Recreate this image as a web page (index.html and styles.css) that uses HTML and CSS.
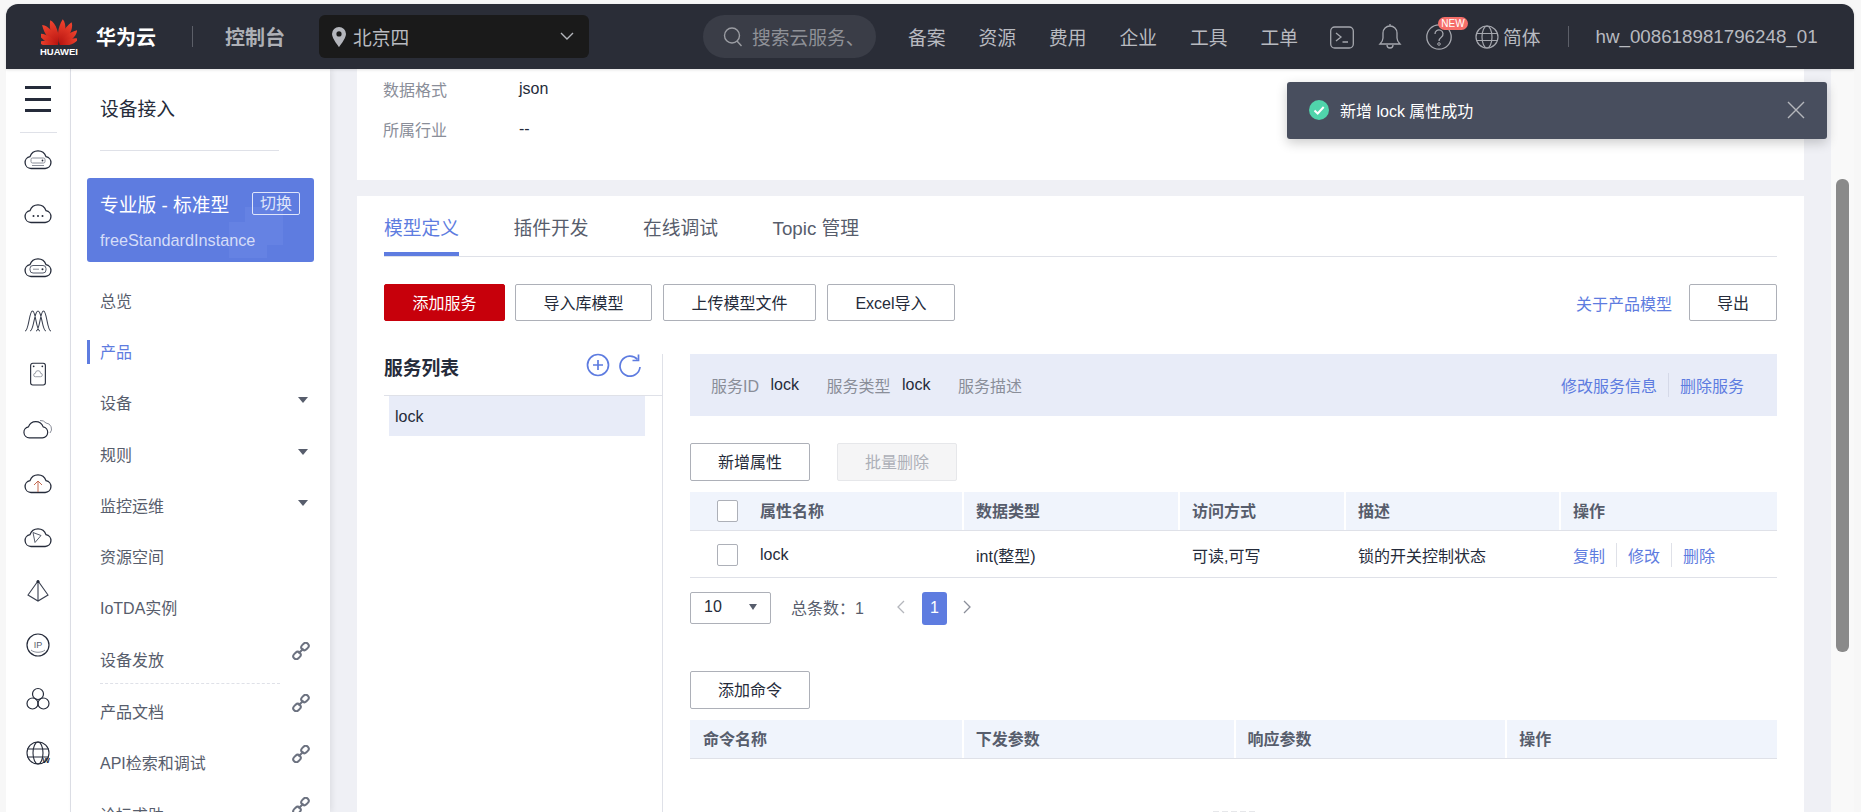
FILE: index.html
```html
<!DOCTYPE html>
<html lang="zh-CN">
<head>
  <meta charset="UTF-8">
  <meta name="viewport" content="width=device-width, initial-scale=1.0">
  <title>设备接入 - 控制台</title>
  <link rel="stylesheet" href="styles.css">
</head>
<body>
  <svg class="defs" width="0" height="0">
    <defs>
      <symbol id="cloud" viewBox="0 0 30 24">
        <path d="M8 21.5a6 6 0 0 1-1-11.9A8.5 8.5 0 0 1 23 9.6a6 6 0 0 1-.8 11.9z" fill="none" stroke="currentColor" stroke-width="1.3"/>
      </symbol>
      <symbol id="chain" viewBox="0 0 18 18">
        <g fill="none" stroke="currentColor" stroke-width="2">
          <rect x="9" y="1.5" width="8" height="6" rx="3" transform="rotate(-45 13 4.5)"/>
          <rect x="1" y="10.5" width="8" height="6" rx="3" transform="rotate(-45 5 13.5)"/>
          <path d="M6.5 11.5l5-5"/>
        </g>
      </symbol>
      <path id="petal" d="M0 0C-4.6-6-6.2-16-2.6-25.500C2.600-22 4.400-9 0 0z"/>
      <linearGradient id="petalfill" x1="0" y1="0" x2="0" y2="1">
        <stop offset="0" stop-color="#f2452f"/>
        <stop offset="1" stop-color="#b5120f"/>
      </linearGradient>
    </defs>
  </svg>

  <div class="app">
    <header class="topbar">
      <div class="logo">
        <svg width="36" height="28" viewBox="0 0 36 28">
          <g transform="translate(18 27.500)" fill="url(#petalfill)">
            <use href="#petal" transform="rotate(-12) translate(-1 0)"/>
            <use href="#petal" transform="rotate(12) translate(1 0)"/>
            <use href="#petal" transform="rotate(-33) translate(-1 0)"/>
            <use href="#petal" transform="rotate(33) translate(1 0)"/>
            <use href="#petal" transform="rotate(-55) translate(-1 0) scale(.9)"/>
            <use href="#petal" transform="rotate(55) translate(1 0) scale(.9)"/>
            <use href="#petal" transform="rotate(-76) translate(-1 0) scale(.8)"/>
            <use href="#petal" transform="rotate(76) translate(1 0) scale(.8)"/>
          </g>
        </svg>
        <span class="logo-word">HUAWEI</span>
      </div>
      <div class="brand">华为云</div>
      <div class="bar-divider brand-divider"></div>
      <div class="console">控制台</div>
      <div class="region">
        <svg class="pin" width="16" height="22" viewBox="0 0 16 22"><path d="M8 1a7 7 0 0 0-7 7c0 4.500 7 13 7 13s7-8.500 7-13a7 7 0 0 0-7-7zm0 9.500a2.600 2.600 0 1 1 0-5.200 2.600 2.600 0 0 1 0 5.200z" fill="#b4b6bc"/></svg>
        <span class="region-name">北京四</span>
        <svg class="chev" width="14" height="9" viewBox="0 0 14 9"><path d="M1 1l6 6 6-6" fill="none" stroke="#b4b6bc" stroke-width="1.400"/></svg>
      </div>
      <div class="search">
        <svg width="20" height="22" viewBox="0 0 20 22"><circle cx="9" cy="9.500" r="7.500" fill="none" stroke="#9a9ca2" stroke-width="1.400"/><path d="M14 15l4.500 5" stroke="#9a9ca2" stroke-width="1.400"/></svg>
        <span class="search-text">搜索云服务、</span>
      </div>
      <nav class="topnav">
        <a>备案</a><a>资源</a><a>费用</a><a>企业</a><a>工具</a><a>工单</a>
      </nav>
      <div class="top-icons">
        <svg width="24" height="24" viewBox="0 0 24 24"><rect x=".7" y="2" width="22.600" height="21" rx="4" fill="none" stroke="#a5a7ae" stroke-width="1.300"/><path d="M6 8l5 4-5 4M12.500 17H18" fill="none" stroke="#a5a7ae" stroke-width="1.300"/></svg>
        <svg width="24" height="28" viewBox="0 0 24 28"><path d="M2 21c2-2 3-3 3-6V10a7 7 0 0 1 14 0v5c0 3 1 4 3 6zM9 22a3 3 0 0 0 6 0M12 3V1" fill="none" stroke="#a5a7ae" stroke-width="1.300"/></svg>
        <div class="help">
          <svg width="26" height="26" viewBox="0 0 26 26"><circle cx="13" cy="13" r="12.200" fill="none" stroke="#a5a7ae" stroke-width="1.300"/><path d="M9 10a4 4 0 1 1 6.500 3c-1.500 1.200-2.500 2-2.500 4" fill="none" stroke="#a5a7ae" stroke-width="1.300"/><circle cx="13" cy="20" r="1.300" fill="none" stroke="#a5a7ae"/></svg>
          <span class="new-badge">NEW</span>
        </div>
        <svg class="globe" width="26" height="26" viewBox="0 0 26 26"><g fill="none" stroke="#a5a7ae" stroke-width="1.200"><circle cx="13" cy="13" r="11"/><ellipse cx="13" cy="13" rx="5" ry="11"/><path d="M2.500 9.500h21M2.500 16.500h21"/></g></svg>
      </div>
      <span class="lang">简体</span>
      <div class="bar-divider user-divider"></div>
      <span class="user">hw_008618981796248_01</span>
    </header>

    <div class="main">
      <aside class="rail">
        <div class="burger"><i></i><i></i><i></i></div>
        <div class="rail-line"></div>
        <div class="rail-icons">
          <svg viewBox="0 0 30 24"><use href="#cloud"/><rect x="8" y="11" width="14" height="5" rx="1.500" fill="none" stroke="#8a8e99"/><circle cx="19.500" cy="13.500" r=".9"/><path d="M9 18.500h12" stroke="#8a8e99"/></svg>
          <svg viewBox="0 0 30 24"><use href="#cloud"/><circle cx="10.500" cy="15" r="1"/><circle cx="15" cy="15" r="1"/><circle cx="19.500" cy="15" r="1"/></svg>
          <svg viewBox="0 0 30 24"><use href="#cloud"/><rect x="7" y="10.500" width="16" height="7.500" rx="3" fill="none" stroke="#575d6c"/><circle cx="19.500" cy="14.200" r="1"/><path d="M10 14.200h6" stroke="#8a8e99"/></svg>
          <svg viewBox="0 0 30 24"><path d="M2 22C6 22 6 2 9.500 2S13 22 17 22M7 22C11 22 11 2 15 2S19 22 23 22M13 22C17 22 17 2 20.500 2S24 22 28 22" fill="none" stroke="#3a4050" stroke-width="1.100"/></svg>
          <svg viewBox="0 0 30 30"><rect x="6.500" y="1.500" width="17" height="25" rx="2.500" fill="none" stroke="#252b3a" stroke-width="1.300"/><circle cx="10" cy="5" r="1"/><circle cx="20" cy="5" r="1"/><path d="M12 17a2 2 0 0 1 0-4 3 3 0 0 1 6 0 2 2 0 0 1 0 4z" fill="none" stroke="#8a8e99"/></svg>
          <svg viewBox="0 0 30 24"><path d="M17 3.500a7 7 0 0 1 6 2.500 6 6 0 0 1 4 10" fill="none" stroke="#8a8e99"/><g transform="translate(-1 1) scale(.92)"><use href="#cloud" width="30" height="24"/></g></svg>
          <svg viewBox="0 0 30 24"><use href="#cloud"/><path d="M15 21V11M11 14l4-4 4 4" fill="none" stroke="#c46a50"/></svg>
          <svg viewBox="0 0 30 24"><use href="#cloud"/><path d="M10 7.500l8 3-6 7z" fill="none" stroke="#575d6c"/></svg>
          <svg viewBox="0 0 30 24"><path d="M15 2L5 16l10 6 10-6zM15 2v20" fill="none" stroke="#3a4050" stroke-width="1.100"/><circle cx="15" cy="2.500" r="1.500"/></svg>
          <svg viewBox="0 0 30 24"><circle cx="15" cy="12" r="11" fill="none" stroke="#252b3a" stroke-width="1.200"/><text x="15" y="14.500" class="rail-text">IP</text><path d="M8 17c3 3 11 3 14 0" fill="none" stroke="#8a8e99"/></svg>
          <svg viewBox="0 0 30 24"><g fill="none" stroke="#252b3a" stroke-width="1.200"><circle cx="15" cy="7" r="5.500"/><circle cx="9.500" cy="16.500" r="5.500"/><circle cx="20.500" cy="16.500" r="5.500"/></g></svg>
          <svg viewBox="0 0 30 24"><g fill="none" stroke="#252b3a" stroke-width="1.100"><circle cx="15" cy="12" r="11"/><ellipse cx="15" cy="12" rx="5" ry="11"/><path d="M4 8h22M4 16h22"/></g><text x="23" y="22" class="rail-w">W</text></svg>
        </div>
      </aside>

      <aside class="sidenav">
        <div class="side-title">设备接入</div>
        <div class="side-line"></div>
        <div class="instance">
          <div class="instance-top">
            <span>专业版 - 标准型</span>
            <span class="switch">切换</span>
          </div>
          <div class="instance-name">freeStandardInstance</div>
        </div>
        <ul class="side-menu">
          <li>总览</li>
          <li class="active">产品</li>
          <li>设备<i class="caret"></i></li>
          <li>规则<i class="caret"></i></li>
          <li>监控运维<i class="caret"></i></li>
          <li>资源空间</li>
          <li>IoTDA实例</li>
          <li class="split">设备发放<svg class="link"><use href="#chain"/></svg></li>
          <li>产品文档<svg class="link"><use href="#chain"/></svg></li>
          <li>API检索和调试<svg class="link"><use href="#chain"/></svg></li>
          <li>论坛求助<svg class="link"><use href="#chain"/></svg></li>
        </ul>
      </aside>

      <main class="content">
        <section class="card info-card">
          <div class="info-row"><span class="info-key">数据格式</span><span>json</span></div>
          <div class="info-row"><span class="info-key">所属行业</span><span>--</span></div>
        </section>

        <section class="card model-card">
          <div class="tabs">
            <a class="tab on">模型定义</a>
            <a class="tab">插件开发</a>
            <a class="tab">在线调试</a>
            <a class="tab">Topic 管理</a>
          </div>

          <div class="toolbar">
            <button class="btn btn-red">添加服务</button>
            <button class="btn btn-import">导入库模型</button>
            <button class="btn btn-upload">上传模型文件</button>
            <button class="btn btn-excel">Excel导入</button>
            <a class="link-text about">关于产品模型</a>
            <button class="btn btn-export">导出</button>
          </div>

          <div class="service-area">
            <div class="service-list">
              <div class="list-head">
                <span class="list-title">服务列表</span>
                <svg width="24" height="24" viewBox="0 0 24 24"><circle cx="12" cy="12" r="10.500" fill="none" stroke="#5e7ce0" stroke-width="1.700"/><path d="M12 7v10M7 12h10" stroke="#5e7ce0" stroke-width="1.700"/></svg>
                <svg width="24" height="24" viewBox="0 0 24 24"><path d="M19.500 6.500A10 10 0 1 0 22 14" fill="none" stroke="#5e7ce0" stroke-width="1.700"/><path d="M20.500 1.500v6h-6" fill="none" stroke="#5e7ce0" stroke-width="1.700"/></svg>
              </div>
              <div class="list-item">lock</div>
            </div>

            <div class="service-detail">
              <div class="band">
                <span class="band-key">服务ID</span><span class="band-val">lock</span>
                <span class="band-key">服务类型</span><span class="band-val">lock</span>
                <span class="band-key">服务描述</span>
                <span class="band-links">
                  <a class="link-text">修改服务信息</a><a class="link-text">删除服务</a>
                </span>
              </div>

              <div class="row-btns">
                <button class="btn btn-wide">新增属性</button>
                <button class="btn btn-wide btn-off">批量删除</button>
              </div>

              <div class="grid prop-grid grid-head">
                <div class="cell check-cell"><i class="check"></i>属性名称</div>
                <div class="cell">数据类型</div>
                <div class="cell">访问方式</div>
                <div class="cell">描述</div>
                <div class="cell">操作</div>
              </div>
              <div class="grid prop-grid grid-row">
                <div class="cell check-cell"><i class="check"></i>lock</div>
                <div class="cell">int(整型)</div>
                <div class="cell">可读,可写</div>
                <div class="cell">锁的开关控制状态</div>
                <div class="cell ops"><a class="link-text">复制</a><a class="link-text">修改</a><a class="link-text">删除</a></div>
              </div>

              <div class="pager">
                <div class="page-size">10<i class="caret"></i></div>
                <span class="total">总条数：1</span>
                <svg width="10" height="14" viewBox="0 0 10 14"><path d="M8 1L2 7l6 6" fill="none" stroke="#b4b6bc" stroke-width="1.300"/></svg>
                <span class="page-now">1</span>
                <svg width="10" height="14" viewBox="0 0 10 14"><path d="M2 1l6 6-6 6" fill="none" stroke="#8a8e99" stroke-width="1.300"/></svg>
              </div>

              <button class="btn btn-wide btn-command">添加命令</button>

              <div class="grid cmd-grid grid-head">
                <div class="cell">命令名称</div>
                <div class="cell">下发参数</div>
                <div class="cell">响应参数</div>
                <div class="cell">操作</div>
              </div>
              <div class="empty-mark"></div>
            </div>
          </div>
        </section>
      </main>

      <div class="scrollbar"><div class="thumb"></div></div>

      <div class="toast">
        <svg width="20" height="20" viewBox="0 0 20 20"><circle cx="10" cy="10" r="10" fill="#50d4ab"/><path d="M5.500 10.500l3.200 3 6-6.500" fill="none" stroke="#fff" stroke-width="2"/></svg>
        <span class="toast-text">新增 lock 属性成功</span>
        <svg width="18" height="18" viewBox="0 0 18 18"><path d="M1 1l16 16M17 1L1 17" stroke="#b4b6bc" stroke-width="1.400"/></svg>
      </div>
    </div>
  </div>
</body>
</html>
```

FILE: styles.css
```css
* {
  margin: 0;
  padding: 0;
  box-sizing: border-box;
}

body {
  font-family: "Liberation Sans", "Noto Sans CJK SC", sans-serif;
  font-size: 16px;
  color: #252b3a;
  background: #f7f7f7;
  height: 100vh;
  overflow: hidden;
  padding: 4px 7px 0 6px;
}

.defs {
  position: absolute;
}

.app {
  height: 808px;
  display: flex;
  flex-direction: column;
}

/* top bar */
.topbar {
  height: 65px;
  flex: none;
  display: flex;
  align-items: center;
  background: #2a2d37;
  border-radius: 12px 12px 0 0;
  color: #b8bac0;
  position: relative;
  z-index: 3;
  box-shadow: 0 1px 3px rgba(0, 0, 0, 0.12);
}

.logo {
  width: 36px;
  margin-left: 35px;
  display: flex;
  flex-direction: column;
  align-items: center;
}

.logo svg {
  margin-top: 1px;
}

.logo-word {
  font-size: 9.500px;
  font-weight: bold;
  color: #fff;
  line-height: 11px;
  margin-top: 1px;
}

.brand {
  margin-left: 19px;
  font-size: 20px;
  font-weight: bold;
  color: #fff;
}

.bar-divider {
  width: 1px;
  height: 21px;
  background: #5c5f68;
}

.brand-divider {
  margin-left: 36px;
}

.console {
  margin-left: 32px;
  font-size: 20px;
  font-weight: bold;
  color: #aeb0b6;
}

.region {
  width: 270px;
  height: 43px;
  margin-left: 34px;
  padding: 0 15px 0 12px;
  display: flex;
  align-items: center;
  background: #1a1a1a;
  border-radius: 6px;
}

.region-name {
  margin-left: 6px;
  font-size: 18.750px;
  flex: 1;
}

.search {
  width: 173px;
  height: 43px;
  margin-left: 114px;
  padding-left: 20px;
  display: flex;
  align-items: center;
  gap: 9px;
  background: #3a3d47;
  border-radius: 22px;
  overflow: hidden;
}

.search-text {
  font-size: 18.750px;
  color: #8f9197;
  white-space: nowrap;
}

.topnav {
  margin-left: 32px;
  display: flex;
  gap: 33px;
  font-size: 18.750px;
}

.top-icons {
  margin-left: 32px;
  display: flex;
  align-items: center;
  gap: 24px;
}

.globe {
  margin-left: -2px;
}

.help {
  position: relative;
  display: flex;
}

.new-badge {
  position: absolute;
  left: 12px;
  top: -7px;
  width: 30px;
  height: 13px;
  background: #f66f6a;
  border-radius: 7px;
  color: #fff;
  font-size: 10px;
  line-height: 13px;
  text-align: center;
}

.lang {
  margin-left: 3px;
  font-size: 18.750px;
}

.user-divider {
  margin-left: 27px;
}

.user {
  margin-left: 27px;
  font-size: 18.750px;
}

/* body of the page */
.main {
  flex: 1;
  min-height: 0;
  display: flex;
  position: relative;
  background: #eff0f5;
}

.rail {
  width: 65px;
  flex: none;
  background: #fff;
  border-right: 1px solid #dfe1e8;
  padding-top: 17px;
  display: flex;
  flex-direction: column;
  align-items: center;
}

.burger {
  width: 26px;
  display: flex;
  flex-direction: column;
  gap: 8.500px;
}

.burger i {
  display: block;
  height: 3px;
  background: #252b3a;
}

.rail-line {
  width: 37px;
  height: 1px;
  margin-top: 20px;
  background: #dfe1e8;
}

.rail-icons {
  margin-top: 13px;
  display: flex;
  flex-direction: column;
  align-items: center;
  gap: 28px;
  color: #252b3a;
}

.rail-icons svg {
  width: 30px;
  height: 26px;
  fill: #252b3a;
}

.rail-icons use {
  color: #252b3a;
}

.rail-text {
  font-size: 9px;
  text-anchor: middle;
  fill: #575d6c;
}

.rail-w {
  font-size: 8px;
  font-weight: bold;
  text-anchor: middle;
  fill: #252b3a;
  stroke: #fff;
  stroke-width: 0;
}

.sidenav {
  width: 259px;
  flex: none;
  background: #fff;
  box-shadow: 2px 0 6px rgba(0, 0, 0, 0.08);
  padding: 0 16px;
  position: relative;
  z-index: 1;
}

.side-title {
  margin: 29px 0 0 13px;
  font-size: 18.750px;
  line-height: 24px;
}

.side-line {
  width: 179px;
  height: 1px;
  margin: 28px 0 0 13px;
  background: #dfe1e8;
}

.instance {
  width: 227px;
  height: 84px;
  margin-top: 27px;
  padding: 12px 14px 0 13px;
  border-radius: 3px;
  color: #fff;
  background:
    linear-gradient(#6582e3, #6582e3) 158px 29px / 38px 38px no-repeat,
    linear-gradient(#6582e3, #6582e3) 142px 44px / 38px 36px no-repeat,
    #5e7ce0;
}

.instance-top {
  display: flex;
  justify-content: space-between;
  align-items: center;
  font-size: 18.750px;
}

.switch {
  width: 48px;
  height: 23px;
  border: 1px solid #dfe5fa;
  border-radius: 2px;
  font-size: 16px;
  line-height: 21px;
  text-align: center;
  color: #dfe5fa;
}

.instance-name {
  margin-top: 14px;
  font-size: 16.250px;
  color: #d5ddf8;
}

.side-menu {
  list-style: none;
  margin-top: 12px;
  color: #575d6c;
}

.side-menu li {
  height: 51.300px;
  padding-left: 13px;
  display: flex;
  align-items: center;
  justify-content: space-between;
  position: relative;
}

.side-menu li.active {
  color: #5e7ce0;
}

.side-menu li.active::before {
  content: "";
  position: absolute;
  left: 0;
  top: 15px;
  width: 3px;
  height: 24px;
  background: #5e7ce0;
}

.side-menu li.split {
  margin-bottom: 1px;
}

.side-menu li.split::after {
  content: "";
  position: absolute;
  left: 13px;
  right: 34px;
  bottom: 0;
  border-bottom: 1px dashed #dfe1e8;
}

.caret {
  display: block;
  width: 0;
  height: 0;
  margin: -4px 6px 0 0;
  border-left: 5px solid transparent;
  border-right: 5px solid transparent;
  border-top: 6px solid #575d6c;
}

.link {
  width: 18px;
  height: 18px;
  margin: -16px 4px 0 0;
  color: #6c7280;
}

/* content column */
.content {
  flex: 1;
  min-width: 0;
  padding: 0 27px;
  overflow: hidden;
}

.card {
  background: #fff;
}

.info-card {
  height: 111px;
  padding: 0 26px;
}

.info-row {
  display: flex;
  align-items: center;
  height: 40px;
}

.info-key {
  width: 136px;
  color: #8a8e99;
}

.model-card {
  margin-top: 16px;
  padding: 0 27px;
  height: 700px;
}

.tabs {
  display: flex;
  gap: 54.500px;
  padding-top: 20px;
  border-bottom: 1px solid #dfe1e8;
  font-size: 18.750px;
  height: 61px;
}

.tab {
  height: 60px;
  margin-top: -20px;
  padding-top: 21px;
  line-height: 24px;
  color: #575d6c;
}

.tab.on {
  color: #5e7ce0;
  border-bottom: 4px solid #5e7ce0;
}

.toolbar {
  display: flex;
  align-items: center;
  margin-top: 27px;
  height: 37px;
}

.btn {
  height: 37px;
  padding-bottom: 2px;
  font: inherit;
  color: #252b3a;
  background: #fff;
  border: 1px solid #adb0b8;
  border-radius: 2px;
}

.btn-red {
  width: 121px;
  background: #c7000b;
  border-color: #c7000b;
  color: #fff;
}

.btn-import {
  width: 137px;
  margin-left: 10px;
}

.btn-upload {
  width: 153px;
  margin-left: 11px;
}

.btn-excel {
  width: 128px;
  margin-left: 11px;
}

.about {
  margin-left: auto;
}

.btn-export {
  width: 88px;
  margin-left: 17px;
}

.link-text {
  color: #5e7ce0;
}

.service-area {
  display: flex;
  margin-top: 33px;
}

.service-list {
  width: 279px;
  flex: none;
  border-right: 1px solid #dfe1e8;
  height: 500px;
}

.list-head {
  height: 42px;
  display: flex;
  align-items: flex-start;
  gap: 8px;
  padding-right: 20px;
  padding-top: 1px;
  border-bottom: 1px solid #dfe1e8;
}

.list-title {
  flex: 1;
  font-size: 18.750px;
  font-weight: bold;
  line-height: 26px;
  padding-top: 1px;
}

.list-head svg {
  margin-top: -2px;
}

.list-item {
  width: 256px;
  height: 40px;
  margin-left: 5px;
  padding-left: 6px;
  line-height: 41px;
  background: #e8ecf8;
}

.service-detail {
  flex: 1;
  min-width: 0;
  padding-left: 27px;
}

.band {
  height: 62px;
  padding: 0 33px 0 21px;
  display: flex;
  align-items: center;
  background: #e8ecf8;
}

.band-key {
  color: #8a8e99;
}

.band-val {
  margin: 0 27.500px 0 11.500px;
}

.band-links {
  margin-left: auto;
  display: flex;
}

.band-links a + a {
  margin-left: 11px;
  padding-left: 11px;
  border-left: 1px solid #d5d9e8;
}

.row-btns {
  display: flex;
  gap: 27px;
  margin-top: 27px;
}

.btn-wide {
  width: 120px;
  height: 38px;
  display: block;
}

.btn-off {
  background: #f5f5f6;
  border-color: #e6e7ea;
  color: #adb0b8;
}

.grid {
  display: grid;
}

.prop-grid {
  grid-template-columns: 272px 216px 166px 215px 218px;
}

.cmd-grid {
  grid-template-columns: repeat(4, 1fr);
}

.cell {
  display: flex;
  align-items: center;
  padding-left: 14px;
}

.grid-head {
  height: 39px;
  margin-top: 11px;
  background: #f0f4fc;
  border-bottom: 1px solid #dfe1e8;
  font-weight: bold;
  color: #575d6c;
}

.grid-head .cell {
  padding-left: 13px;
  padding-bottom: 3px;
}

.grid-head .cell + .cell {
  padding-left: 12px;
  border-left: 2px solid #fff;
}

.grid-row {
  height: 47px;
  border-bottom: 1px solid #dfe1e8;
}

.grid-row .cell {
  padding-top: 1px;
}

.grid-head .check-cell,
.grid-row .check-cell {
  padding-left: 27px;
}

.check {
  display: block;
  width: 21px;
  height: 22px;
  margin-right: 22px;
  border: 1px solid #adb0b8;
  border-radius: 2px;
  background: #fff;
}

.grid-head .check {
  margin-top: 3px;
}

.ops a + a {
  margin-left: 11px;
  padding-left: 11px;
  border-left: 1px solid #dfe1e8;
}

.pager {
  height: 33px;
  margin-top: 14px;
  display: flex;
  align-items: center;
  color: #575d6c;
}

.pager svg {
  margin-top: -3px;
}

.page-size {
  width: 81px;
  height: 32px;
  margin-top: -1px;
  padding: 0 13px 2px;
  display: flex;
  align-items: center;
  justify-content: space-between;
  border: 1px solid #adb0b8;
  border-radius: 2px;
  color: #252b3a;
}

.page-size .caret {
  margin: 0;
  border-left-width: 4px;
  border-right-width: 4px;
}

.total {
  margin: -3px 32px 0 20px;
}

.page-now {
  width: 25px;
  height: 33px;
  margin: 0 15px 0 16px;
  line-height: 31px;
  text-align: center;
  color: #fff;
  background: #5e7ce0;
  border-radius: 3px;
}

.btn-command {
  margin-top: 46px;
}

.cmd-grid.grid-head {
  margin-top: 11px;
}

.empty-mark {
  width: 42px;
  margin: 52px auto 0;
  border-top: 2px dashed #e6e7ea;
}

/* scrollbar and toast */
.scrollbar {
  width: 23px;
  flex: none;
  background: #f9f9f9;
  padding: 110px 0 0 5px;
}

.thumb {
  width: 13px;
  height: 473px;
  background: #8a8a8a;
  border-radius: 6px;
}

.toast {
  position: absolute;
  left: 1281px;
  top: 13px;
  width: 540px;
  height: 57px;
  padding: 0 22px 2px 22px;
  display: flex;
  align-items: center;
  background: #484e5e;
  border-radius: 3px;
  box-shadow: 0 4px 12px rgba(0, 0, 0, 0.2);
  color: #fff;
  z-index: 2;
}

.toast-text {
  flex: 1;
  margin-left: 11px;
}
```
